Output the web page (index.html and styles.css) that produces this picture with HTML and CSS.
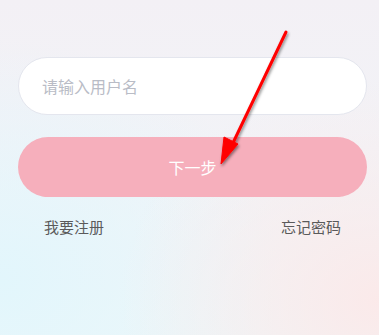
FILE: index.html
```html
<!DOCTYPE html>
<html lang="zh">
<head>
    <meta charset="UTF-8">
    <meta name="viewport" content="width=device-width, initial-scale=1.0">
    <title>登录</title>
    <link rel="stylesheet" href="styles.css">
</head>
<body>
    <div class="page">
        <div class="login-box">
            <input type="text" class="user-input" placeholder="请输入用户名">
            <button class="btn-next">下一步</button>
            <div class="links">
                <span>我要注册</span>
                <span>忘记密码</span>
            </div>
        </div>

        <!-- 标注箭头 -->
        <svg class="arrow" width="379" height="335" viewBox="0 0 379 335">
            <defs>
                <filter id="shadow" x="-20%" y="-20%" width="140%" height="140%">
                    <feDropShadow dx="1" dy="2" stdDeviation="1.6" flood-color="#000" flood-opacity="0.45"/>
                </filter>
            </defs>
            <g filter="url(#shadow)" fill="#ff0000" stroke="#ff0000">
                <line x1="286" y1="32" x2="232" y2="145" stroke-width="3" stroke-linecap="round"/>
                <polygon points="221,164 224,137 238,144" stroke-width="1" stroke-linejoin="round"/>
            </g>
        </svg>
    </div>
</body>
</html>
```

FILE: styles.css
```css
html, body {
    margin: 0;
    padding: 0;
}
body {
    font-family: "Noto Sans CJK SC", "Noto Sans", sans-serif;
    width: 379px;
    height: 335px;
    overflow: hidden;
}
.page {
    position: relative;
    width: 379px;
    height: 335px;
    background:
        radial-gradient(ellipse 260px 220px at 379px 300px, rgba(252, 232, 232, 0.9), rgba(252, 232, 232, 0)),
        radial-gradient(ellipse 280px 240px at 0px 280px, rgba(226, 246, 252, 1), rgba(226, 246, 252, 0)),
        linear-gradient(180deg, #f3f0f5 0%, #f2f3f7 45%, #eef7f9 100%);
}
.login-box {
    padding: 57px 12px 0 18px;
}
.user-input {
    display: block;
    box-sizing: border-box;
    width: 100%;
    height: 58px;
    border: 1px solid #e4e6ee;
    border-radius: 29px;
    background-color: #fff;
    padding: 0 23px;
    font-family: inherit;
    font-size: 16px;
    color: #333;
    outline: none;
}
.user-input::placeholder {
    color: #b9bcc6;
}
.btn-next {
    display: block;
    width: 100%;
    height: 60px;
    margin-top: 22px;
    border: none;
    border-radius: 30px;
    background-color: #f6afbc;
    color: #fff;
    font-family: inherit;
    font-size: 16px;
    cursor: pointer;
}
.links {
    display: flex;
    justify-content: space-between;
    padding: 19px 26px 0 26px;
    font-size: 15px;
    color: #5a5a5a;
}
.arrow {
    position: absolute;
    top: 0;
    left: 0;
    pointer-events: none;
}
```
